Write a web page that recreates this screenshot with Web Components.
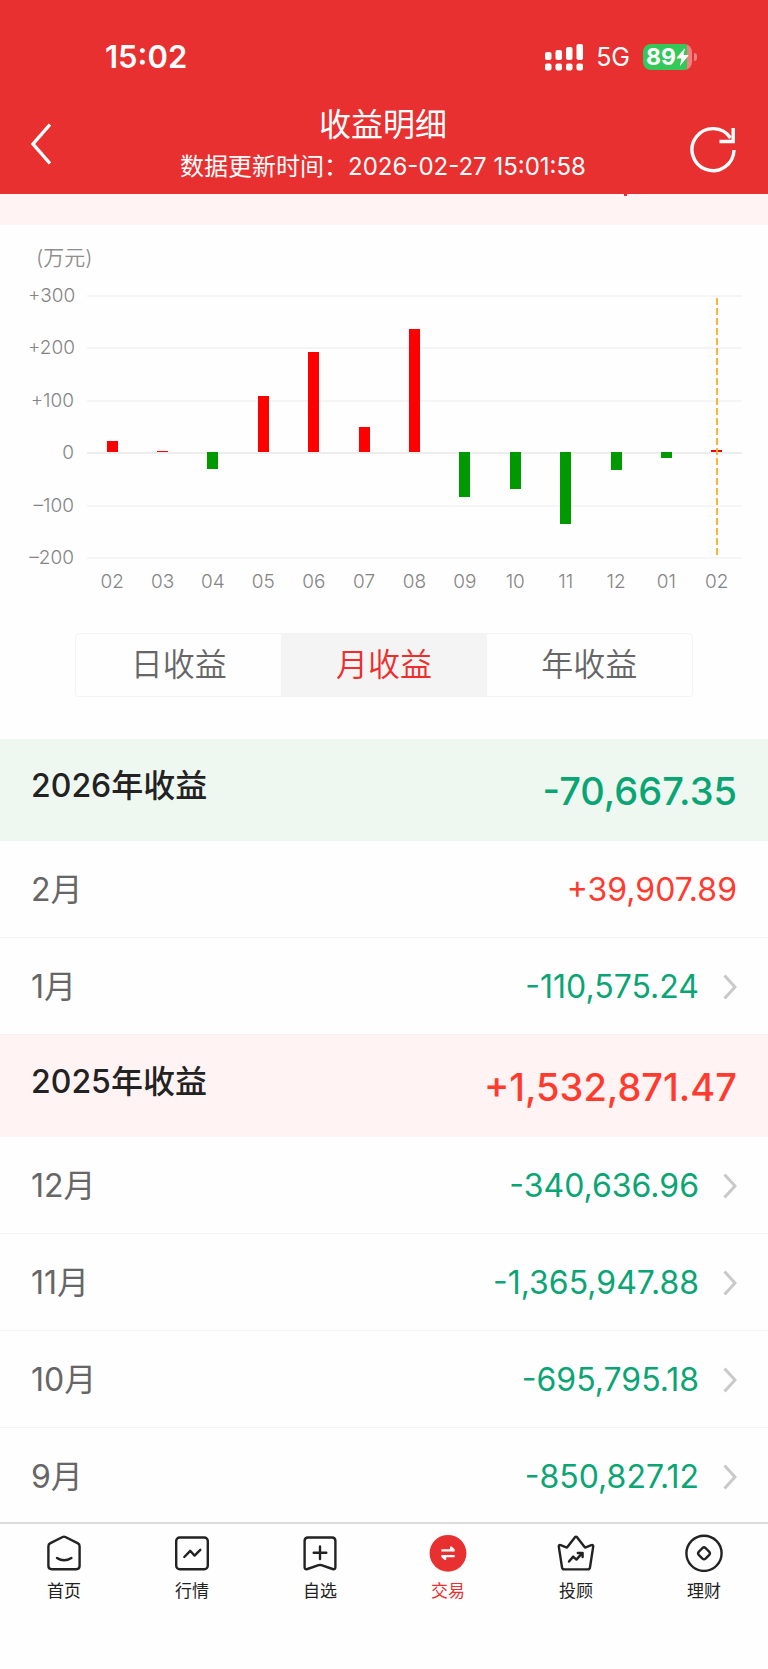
<!DOCTYPE html>
<html lang="zh-CN">
<head>
  <meta charset="UTF-8">
  <meta name="viewport" content="width=device-width, initial-scale=1.0">
  <title>收益明细</title>
  <style>
    body {
      margin: 0;
      min-height: 100vh;
      display: flex;
      flex-direction: column;
      background: #fefefe;
      font-family: Inter, 'Noto Sans CJK SC', sans-serif;
      color: #222;
      --brand: #e83030;
      --up: #ff3b30;
      --down: #0aa574;
      --line: #f3f3f4;
      --pink: #fff4f3;
    }
  </style>
</head>
<body>

  <status-bar time="15:02" network="5G" battery="89"></status-bar>

  <page-header>
    收益明细
    <span slot="sub">数据更新时间：2026-02-27 15:01:58</span>
  </page-header>

  <summary-strip></summary-strip>

  <profit-chart unit="(万元)"></profit-chart>

  <period-tabs>
    <period-tab>日收益</period-tab>
    <period-tab active>月收益</period-tab>
    <period-tab>年收益</period-tab>
  </period-tabs>

  <main>
    <year-total amount="-70,667.35">2026年收益</year-total>
    <month-row amount="+39,907.89">2月</month-row>
    <month-row amount="-110,575.24" link>1月</month-row>
    <year-total amount="+1,532,871.47">2025年收益</year-total>
    <month-row amount="-340,636.96" link>12月</month-row>
    <month-row amount="-1,365,947.88" link>11月</month-row>
    <month-row amount="-695,795.18" link>10月</month-row>
    <month-row amount="-850,827.12" link>9月</month-row>
  </main>

  <tab-bar>
    <tab-item icon="home">首页</tab-item>
    <tab-item icon="market">行情</tab-item>
    <tab-item icon="watch">自选</tab-item>
    <tab-item icon="trade" active>交易</tab-item>
    <tab-item icon="advisor">投顾</tab-item>
    <tab-item icon="wealth">理财</tab-item>
  </tab-bar>

  <script>
    class StatusBar extends HTMLElement {
      constructor() {
        super();
        this.attachShadow({ mode: 'open' });
        this.shadowRoot.innerHTML = `
          <style>
            :host {
              display: flex;
              align-items: center;
              justify-content: space-between;
              padding: 41px 71px 0 105px;
              line-height: 32px;
              background: var(--brand);
              color: #fff;
            }
            .time { font-size: 31px; font-weight: 600; }
            .right { display: flex; align-items: center; height: 32px; }
            .net { font-size: 25px; margin: 0 13px; }
            svg { display: block; }
            .battery { display: flex; align-items: center; gap: 2px; }
            .cell {
              display: flex;
              align-items: center;
              justify-content: center;
              width: 49px;
              height: 26px;
              border-radius: 8px;
              background: linear-gradient(90deg, #34c759 90%, #f08080 90%);
              font-size: 23px;
              font-weight: 700;
            }
            .nub { width: 3px; height: 8px; border-radius: 0 4px 4px 0; background: #f08080; }
          </style>
          <span class="time">${this.getAttribute('time')}</span>
          <div class="right">
            <svg width="38" height="27" viewBox="0 0 38 27" fill="#fff">
              <rect x="0" y="8" width="6.5" height="8" rx="2"/>
              <rect x="10.5" y="6" width="6.5" height="10" rx="2"/>
              <rect x="21" y="3" width="6.5" height="13" rx="2"/>
              <rect x="31.5" y="0" width="6.5" height="16" rx="2"/>
              <rect x="0" y="19.5" width="6.5" height="7" rx="2"/>
              <rect x="10.5" y="19.5" width="6.5" height="7" rx="2"/>
              <rect x="21" y="19.5" width="6.5" height="7" rx="2"/>
              <rect x="31.5" y="19.5" width="6.5" height="7" rx="2"/>
            </svg>
            <span class="net">${this.getAttribute('network')}</span>
            <div class="battery">
              <span class="cell">${this.getAttribute('battery')}<svg width="13" height="18" viewBox="0 0 13 18" fill="#fff"><path d="M9 0L.8 9.6q-.6.9.4.9H5.6L3.8 18 12.2 8q.6-.9-.4-.9H7.6z"/></svg></span>
              <span class="nub"></span>
            </div>
          </div>
        `;
      }
    }

    class PageHeader extends HTMLElement {
      constructor() {
        super();
        this.attachShadow({ mode: 'open' });
        this.shadowRoot.innerHTML = `
          <style>
            :host {
              display: grid;
              grid-template-columns: 1fr auto 1fr;
              align-items: center;
              padding: 32px 32px 11px 30px;
              background: var(--brand);
              color: #fff;
              text-align: center;
            }
            h1 { margin: 0 0 6px; font-size: 32px; line-height: 40px; font-weight: 400; }
            p { margin: 0; font-size: 24px; line-height: 32px; }
            button { border: 0; padding: 0; background: none; color: inherit; cursor: pointer; }
            .refresh { justify-self: end; }
            .back { justify-self: start; }
            svg { display: block; fill: none; stroke: currentColor; stroke-width: 3.4; }
          </style>
          <button class="back" aria-label="返回">
            <svg width="22" height="42" viewBox="0 0 22 42"><path d="M20 1.5L3 21 20 40.5"/></svg>
          </button>
          <div>
            <h1><slot></slot></h1>
            <p><slot name="sub"></slot></p>
          </div>
          <button class="refresh" aria-label="刷新">
            <svg width="46" height="58" viewBox="0 0 46 58">
              <path d="M44 35A21 21 0 1 1 40.5 23"/>
              <path d="M43.2 13V26.5H29.5"/>
            </svg>
          </button>
        `;
      }
    }

    class SummaryStrip extends HTMLElement {
      constructor() {
        super();
        this.attachShadow({ mode: 'open' });
        this.shadowRoot.innerHTML = `
          <style>
            :host { display: block; height: 31px; background: var(--pink); }
            i { display: block; width: 3px; height: 2px; margin-left: 81.3%; background: var(--brand); }
          </style>
          <i></i>
        `;
      }
    }

    // values are in 万元, the axis runs from +300 down to -200
    const months = [
      ['02', 21], ['03', 3], ['04', -32], ['05', 107], ['06', 192], ['07', 48], ['08', 235],
      ['09', -85], ['10', -70], ['11', -137], ['12', -34], ['01', -11], ['02', 4]
    ];

    class ProfitChart extends HTMLElement {
      constructor() {
        super();
        this.attachShadow({ mode: 'open' });
        const ticks = ['+300', '+200', '+100', '0', '–100', '–200'];
        const last = months.length - 1;
        this.shadowRoot.innerHTML = `
          <style>
            :host {
              display: block;
              padding: 20px 26px 0 28px;
              font-size: 19px;
              line-height: 20px;
              font-weight: 300;
              color: #858585;
            }
            .unit {
              padding-left: 8px;
              margin-bottom: 15px;
              font-size: 21px;
              line-height: 26px;
              font-weight: 350;
              color: #8e8e8e;
            }
            .chart { display: grid; grid-template-columns: 46px 1fr; column-gap: 13px; }
            .ticks {
              display: flex;
              flex-direction: column;
              justify-content: space-between;
              height: 282px;
              text-align: right;
            }
            .plot { display: grid; margin: 9px 0 11px; }
            .lines, .bars { grid-area: 1 / 1; display: grid; }
            .lines div { border-top: 2px solid #f5f5f5; }
            .lines div:nth-child(4) { border-color: #ededed; }
            .lines div:last-child { border-bottom: 2px solid #f5f5f5; margin-bottom: -2px; }
            .bars, .months { grid-template-columns: repeat(13, 1fr); }
            .col { display: grid; grid-template-rows: 3fr 2fr; justify-items: center; }
            .half { grid-column: 1; width: 11px; display: flex; }
            .half.pos { grid-row: 1; align-items: flex-end; }
            .half.neg { grid-row: 2; }
            .half div { width: 100%; }
            .pos div { background: #f00; }
            .neg div { background: #090; }
            .cursor {
              grid-area: 1 / 1 / 3 / 2;
              width: 2px;
              margin-top: 3px;
              background: repeating-linear-gradient(#fbb535 0 7px, transparent 7px 10px);
            }
            .months { grid-column: 2; display: grid; text-align: center; margin-top: 4px; }
          </style>
          <div class="unit">${this.getAttribute('unit')}</div>
          <div class="chart">
            <div class="ticks">${ticks.map(t => `<span>${t}</span>`).join('')}</div>
            <div class="plot">
              <div class="lines">${'<div></div>'.repeat(5)}</div>
              <div class="bars">
                ${months.map(([, v], i) => `
                  <div class="col">
                    ${v > 0
                      ? `<div class="half pos"><div style="height: ${v / 3}%"></div></div>`
                      : `<div class="half neg"><div style="height: ${-v / 2}%"></div></div>`}
                    ${i === last ? '<div class="cursor"></div>' : ''}
                  </div>`).join('')}
              </div>
            </div>
            <div class="months">${months.map(([m]) => `<span>${m}</span>`).join('')}</div>
          </div>
        `;
      }
    }

    class PeriodTabs extends HTMLElement {
      constructor() {
        super();
        this.attachShadow({ mode: 'open' });
        this.shadowRoot.innerHTML = `
          <style>
            :host {
              display: flex;
              margin: 41px 75px 42px;
              border: 1px solid #f3f3f3;
              border-radius: 4px;
              overflow: hidden;
            }
          </style>
          <slot></slot>
        `;
        this.addEventListener('click', (e) => {
          const tab = e.target.closest('period-tab');
          if (!tab) return;
          this.querySelectorAll('period-tab').forEach(t => t.toggleAttribute('active', t === tab));
        });
      }
    }

    class PeriodTab extends HTMLElement {
      constructor() {
        super();
        this.attachShadow({ mode: 'open' });
        this.shadowRoot.innerHTML = `
          <style>
            :host { flex: 1; display: block; }
            button {
              display: block;
              width: 100%;
              border: 0;
              padding: 0;
              background: none;
              font: inherit;
              font-size: 32px;
              line-height: 62px;
              font-weight: 350;
              color: #666;
              cursor: pointer;
            }
            :host([active]) button { background: #f4f4f4; color: #f12c2c; }
          </style>
          <button><slot></slot></button>
        `;
      }
    }

    class YearTotal extends HTMLElement {
      constructor() {
        super();
        this.attachShadow({ mode: 'open' });
        const amount = this.getAttribute('amount');
        const up = amount.startsWith('+');
        this.shadowRoot.innerHTML = `
          <style>
            :host {
              display: flex;
              justify-content: space-between;
              padding: 26px 31px 24px;
              background: ${up ? 'var(--pink)' : '#eff8f0'};
              font-weight: 500;
            }
            .label { font-size: 32px; line-height: 42px; }
            .amount { font-size: 38px; line-height: 52px; color: ${up ? 'var(--up)' : 'var(--down)'}; }
          </style>
          <span class="label"><slot></slot></span>
          <span class="amount">${amount}</span>
        `;
      }
    }

    class MonthRow extends HTMLElement {
      constructor() {
        super();
        this.attachShadow({ mode: 'open' });
        const amount = this.getAttribute('amount');
        const link = this.hasAttribute('link');
        const tag = link ? 'a href="#"' : 'div';
        this.shadowRoot.innerHTML = `
          <style>
            :host { display: block; border-bottom: 1px solid var(--line); }
            .row {
              display: flex;
              align-items: center;
              padding: 25px 31px 23px;
              font-size: 32px;
              line-height: 48px;
              color: #666;
              text-decoration: none;
            }
            .amount { margin-left: auto; color: ${amount.startsWith('+') ? 'var(--up)' : 'var(--down)'}; }
            svg { margin-left: 24px; fill: none; stroke: #c9c9c9; stroke-width: 3; }
          </style>
          <${tag} class="row">
            <span><slot></slot></span>
            <span class="amount">${amount}</span>
            ${link ? '<svg width="14" height="26" viewBox="0 0 14 26"><path d="M1.5 1.5L12 13 1.5 24.5"/></svg>' : ''}
          </${link ? 'a' : 'div'}>
        `;
      }
    }

    class TabBar extends HTMLElement {
      constructor() {
        super();
        this.attachShadow({ mode: 'open' });
        this.shadowRoot.innerHTML = `
          <style>
            /* sits over the bottom divider of the list */
            :host { display: block; flex: 1; border-top: 2px solid #dcdcdc; margin-top: -3px; background: #fefefe; }
            nav { display: flex; padding: 10px 0 40px; }
          </style>
          <nav><slot></slot></nav>
        `;
      }
    }

    const icons = {
      home: `
        <path d="M17.6 3L5 9.4Q3.4 10.2 3.4 12.4V31.8Q3.4 35.2 6.8 35.2H31.2Q34.6 35.2 34.6 31.8V12.4Q34.6 10.2 33 9.4L20.4 3Q19 2.3 17.6 3Z"/>
        <path d="M12 24Q19 28.6 26.4 24"/>`,
      market: `
        <rect x="3.2" y="3.5" width="31.6" height="31.8" rx="3.5"/>
        <path d="M11.3 23L17.2 16.8 21.6 21.6 27.3 15.8"/>`,
      watch: `
        <path d="M7 3.5H31Q34.4 3.5 34.4 7V33Q34.4 36 31.6 35L20.4 31.2Q19 30.7 17.6 31.2L6.4 35Q3.6 36 3.6 33V7Q3.6 3.5 7 3.5Z"/>
        <path d="M19 12.4V25M12.7 18.7H25.3"/>`,
      trade: `
        <circle cx="19" cy="19.3" r="18.4" fill="#e83030" stroke="none"/>
        <path d="M12.4 15.3H21V12.8Q22.6 12 23.8 13.6L25.7 15.6V17.6H12.4ZM25.7 21H12.4V23L14.4 25Q15.6 26.6 17.2 25.8V23.3H25.7Z" fill="#fff" stroke="none"/>`,
      advisor: `
        <path d="M1.8 12.6Q1.6 10.6 3.6 11.2L10 13.6 17.8 3.4Q19 2 20.2 3.4L28 13.6 34.4 11.2Q36.4 10.6 36.2 12.6L33 33.2Q32.6 35.4 30.4 35.4H7.6Q5.4 35.4 5 33.2Z"/>
        <path d="M12 27.5L16.2 22.6 19.4 25.6 25 19.4M20.8 19H25.6V23"/>`,
      wealth: `
        <circle cx="19" cy="19.3" r="17.6"/>
        <path d="M17.5 14Q19 12.7 20.5 14L24.3 17.8Q25.6 19.3 24.3 20.8L20.5 24.6Q19 25.9 17.5 24.6L13.7 20.8Q12.4 19.3 13.7 17.8Z"/>`
    };

    class TabItem extends HTMLElement {
      constructor() {
        super();
        this.attachShadow({ mode: 'open' });
        this.shadowRoot.innerHTML = `
          <style>
            :host { flex: 1; display: block; color: #222; }
            :host([active]) { color: var(--brand); }
            a {
              display: flex;
              flex-direction: column;
              align-items: center;
              gap: 7px;
              font-size: 17px;
              line-height: 24px;
              color: inherit;
              text-decoration: none;
            }
            svg {
              fill: none;
              stroke: currentColor;
              stroke-width: 2.4;
              stroke-linecap: round;
              stroke-linejoin: round;
            }
          </style>
          <a href="#">
            <svg width="38" height="38" viewBox="0 0 38 38">${icons[this.getAttribute('icon')]}</svg>
            <slot></slot>
          </a>
        `;
      }
    }

    customElements.define('status-bar', StatusBar);
    customElements.define('page-header', PageHeader);
    customElements.define('summary-strip', SummaryStrip);
    customElements.define('profit-chart', ProfitChart);
    customElements.define('period-tabs', PeriodTabs);
    customElements.define('period-tab', PeriodTab);
    customElements.define('year-total', YearTotal);
    customElements.define('month-row', MonthRow);
    customElements.define('tab-bar', TabBar);
    customElements.define('tab-item', TabItem);
  </script>

</body>
</html>
